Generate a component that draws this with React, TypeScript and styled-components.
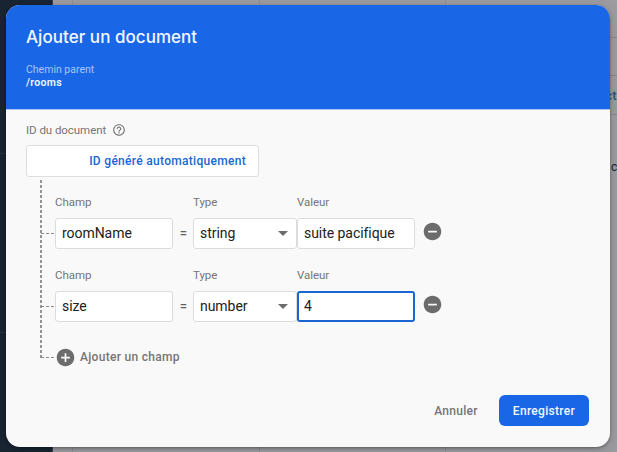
import React from "react";
import styled, { createGlobalStyle, css } from "styled-components";
import { MdAddCircle, MdHelpOutline, MdRemoveCircle } from "react-icons/md";

const GlobalStyle = createGlobalStyle`
  *, *::before, *::after { box-sizing: border-box; }
  html, body, #root { height: 100%; margin: 0; }
  body { overflow: hidden; font-family: Roboto, "Liberation Sans", sans-serif; }
  button, input { font: inherit; }
`;

const Page = styled.div`
  position: relative;
  display: flex;
  height: 452px;
  width: 617px;
  overflow: hidden;
  background: #9c9ca0;
`;

const Sidebar = styled.aside`
  width: 53px;
  flex: none;
  background: #192533;
  border-right: 1px solid #364154;
`;

const SidebarSection = styled.div<{ $height: number }>`
  height: ${(p) => p.$height}px;
  border-bottom: 1px solid #1f3247;
`;

const Gutter = styled.div`
  width: 20px;
  flex: none;
  border-right: 1px solid #8e8e92;
`;

const Panel = styled.div<{ $width: number }>`
  width: ${(p) => p.$width}px;
  flex: none;
  border-right: 1px solid #8e8e92;
`;

const PanelLine = styled.div<{ $height: number }>`
  height: ${(p) => p.$height}px;
  display: flex;
  align-items: center;
  justify-content: flex-end;
  border-bottom: 1px solid #89898d;
  font-size: 13px;
  font-weight: 500;
  letter-spacing: 0.3px;
  color: #304b83;
`;

const PanelText = styled.div`
  padding-top: 45px;
  text-align: right;
  white-space: pre;
  font-size: 12px;
  letter-spacing: -0.2px;
  color: #222226;
`;

const Dialog = styled.section`
  position: absolute;
  left: 6px;
  top: 5px;
  width: 604px;
  height: 442px;
  display: flex;
  flex-direction: column;
  overflow: hidden;
  border-radius: 14px;
  background: #f9f9f9;
  box-shadow: 0 1px 3px rgba(0, 0, 0, 0.35), 0 3px 12px rgba(0, 0, 0, 0.15);
`;

const Header = styled.header`
  height: 105px;
  flex: none;
  padding: 20px 20px 0;
  background: #1967e6;
  border-bottom: 1px solid #a9c5f3;
  color: #f4f8ff;
`;

const Title = styled.h1`
  margin: 0;
  font: 500 17px/24px Inter, "Open Sans", sans-serif;
  letter-spacing: 0.04px;
  white-space: nowrap;
`;

const ParentLabel = styled.div`
  margin-top: 14px;
  font-size: 10.5px;
  line-height: 13px;
  color: #a9c6f6;
`;

const ParentPath = styled.div`
  font-size: 10.5px;
  line-height: 13px;
  font-weight: 600;
  letter-spacing: 0.3px;
`;

const Body = styled.div`
  flex: 1;
  padding: 13px 20px 0;
`;

const Label = styled.div`
  display: flex;
  align-items: center;
  height: 14px;
  font-size: 11.5px;
  letter-spacing: -0.05px;
  color: #757575;
  svg { margin-left: 6px; }
`;

const AutoIdBox = styled.div`
  display: flex;
  align-items: center;
  justify-content: flex-end;
  width: 233px;
  height: 32px;
  margin-top: 8px;
  padding-right: 12px;
  border: 1px solid #dedede;
  border-radius: 3px;
  background: #fff;
`;

const AutoIdButton = styled.button`
  padding: 0;
  border: 0;
  background: none;
  color: #1967d2;
  font-size: 12px;
  font-weight: 500;
  letter-spacing: 0.3px;
`;

const Tree = styled.div`
  margin: 3px 0 0 14px;
  height: 178px;
  background: repeating-linear-gradient(to bottom, #949494 0 3px, transparent 3px 5px) 0 0 / 2px 100% no-repeat;
`;

const FieldRow = styled.div`
  display: grid;
  grid-template-columns: 15px 118px 20px 104px 118px 36px;
  grid-template-rows: 14px 31px;
  row-gap: 9px;
  padding-top: 15px;
  height: 73px;
  align-items: center;

  > * { grid-row: 2; }
`;

const FieldLabel = styled(Label)<{ $column: number }>`
  ${FieldRow} > && {
    grid-column: ${(p) => p.$column};
    grid-row: 1;
  }
`;

const Connector = styled.span`
  width: 13px;
  height: 1px;
  margin: 0 1px 0 1px;
  flex: none;
  background: repeating-linear-gradient(to right, #8b8b8b 0 3px, transparent 3px 5px);
`;

const control = css`
  width: 100%;
  height: 31px;
  padding: 0 6px 1px;
  border: 1px solid #dcdcdc;
  border-radius: 3px;
  background: #fff;
  color: #212121;
  font-size: 14px;
  letter-spacing: -0.05px;
`;

const TextInput = styled.input<{ $active?: boolean }>`
  ${control}
  outline: none;
  ${(p) => p.$active && css`
    border: 2px solid #1a66d0;
    padding: 0 5px 1px;
  `}
`;

const Select = styled.button`
  ${control}
  display: flex;
  align-items: center;
  justify-content: space-between;
  padding-right: 8px;
`;

const Caret = styled.span`
  border: 5px solid transparent;
  border-top-color: #6c6c6c;
  border-bottom: 0;
`;

const Equals = styled.span`
  padding: 0 0 3px 1px;
  text-align: center;
  font-size: 13px;
  font-weight: 500;
  color: #616161;
`;

const IconButton = styled.button`
  display: flex;
  width: 21px;
  height: 21px;
  margin: -5px 0 0 7px;
  padding: 0;
  border: 0;
  background: none;
  color: #6c6c6c;
`;

const AddRow = styled.div`
  display: flex;
  align-items: center;
  height: 22px;
  margin-top: 20px;
`;

const AddButton = styled.button`
  display: flex;
  align-items: center;
  gap: 4px;
  padding: 0;
  border: 0;
  background: none;
  font-size: 12px;
  font-weight: 500;
  letter-spacing: 0.3px;
  white-space: nowrap;
  color: #757575;
  svg { color: #6c6c6c; }
`;

const Footer = styled.footer`
  display: flex;
  justify-content: flex-end;
  gap: 7px;
  height: 52px;
  padding-right: 21px;
`;

const ActionButton = styled.button<{ $primary?: boolean }>`
  height: 31px;
  padding: 0 14px;
  border: 0;
  border-radius: 6px;
  background: ${(p) => (p.$primary ? "#1967e6" : "transparent")};
  color: ${(p) => (p.$primary ? "#f2f7ff" : "#757575")};
  font-size: 12px;
  font-weight: 500;
  letter-spacing: 0.3px;
`;

type Field = { name: string; type: string; value: string; active?: boolean };

const fields: Field[] = [
  { name: "roomName", type: "string", value: "suite pacifique" },
  { name: "size", type: "number", value: "4", active: true },
];

function FieldEditor({ field }: { field: Field }) {
  return (
    <FieldRow>
      <FieldLabel $column={2}>Champ</FieldLabel>
      <FieldLabel $column={4}>Type</FieldLabel>
      <FieldLabel $column={5}>Valeur</FieldLabel>
      <Connector />
      <TextInput defaultValue={field.name} spellCheck={false} />
      <Equals>=</Equals>
      <Select>{field.type}<Caret /></Select>
      <TextInput defaultValue={field.value} $active={field.active} spellCheck={false} />
      <IconButton><MdRemoveCircle size={21} /></IconButton>
    </FieldRow>
  );
}

export default function App() {
  return (
    <>
      <GlobalStyle />
      <Page>
        <Sidebar>
          <SidebarSection $height={154} />
          <SidebarSection $height={179} />
        </Sidebar>
        <Gutter />
        <Panel $width={187} />
        <Panel $width={186} />
        <Panel $width={172}>
          <PanelLine $height={38} />
          <PanelLine $height={38} />
          <PanelLine $height={39}>ct</PanelLine>
          <PanelText>' c</PanelText>
        </Panel>
        <Dialog role="dialog">
          <Header>
            <Title>Ajouter un document</Title>
            <ParentLabel>Chemin parent</ParentLabel>
            <ParentPath>/rooms</ParentPath>
          </Header>
          <Body>
            <Label>ID du document<MdHelpOutline size={14} /></Label>
            <AutoIdBox>
              <AutoIdButton>ID généré automatiquement</AutoIdButton>
            </AutoIdBox>
            <Tree>
              {fields.map((field) => <FieldEditor key={field.name} field={field} />)}
              <AddRow>
                <Connector />
                <AddButton><MdAddCircle size={21} />Ajouter un champ</AddButton>
              </AddRow>
            </Tree>
          </Body>
          <Footer>
            <ActionButton>Annuler</ActionButton>
            <ActionButton $primary>Enregistrer</ActionButton>
          </Footer>
        </Dialog>
      </Page>
    </>
  );
}
